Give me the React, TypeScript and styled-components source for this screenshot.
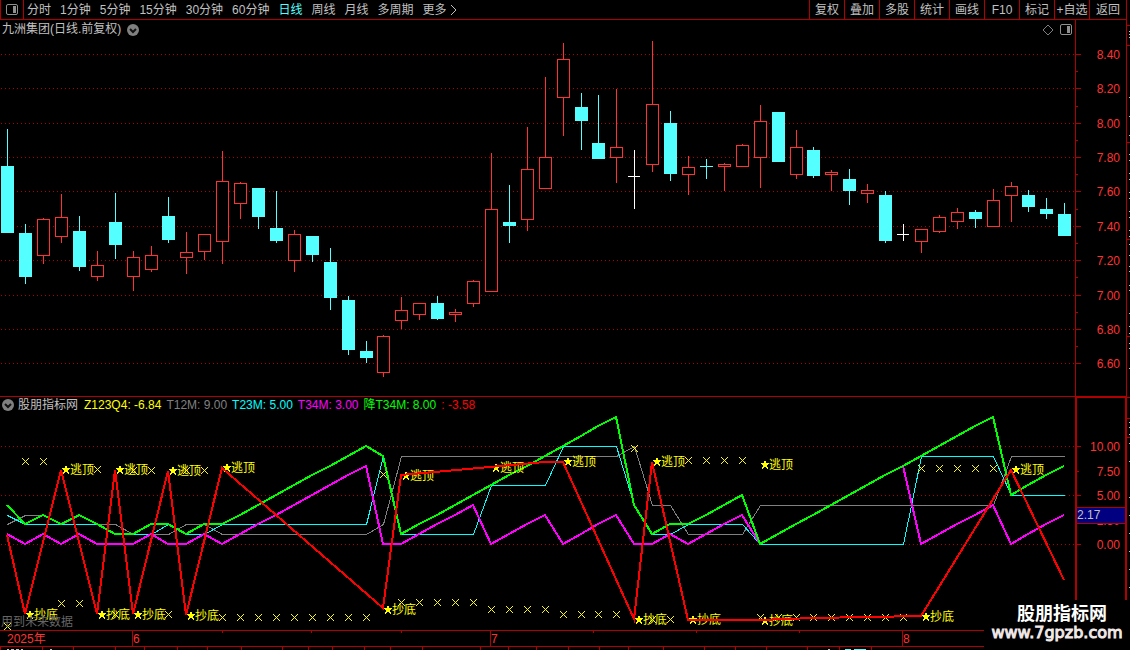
import React, { useLayoutEffect, useRef, useState } from "react";
import styled, { createGlobalStyle } from "styled-components";

const RED = "#b00000";
const BRIGHT = "#ff3232";
const CYAN = "#54ffff";
const YELLOW = "#ffff00";
const FONT = '"Liberation Sans", "Noto Sans CJK SC", sans-serif';

const GlobalStyle = createGlobalStyle`
  *, *::before, *::after { box-sizing: border-box; }
  body { margin: 0; background: #000; font-family: ${FONT}; font-size: 12px; }
`;

const Page = styled.div`
  position: relative;
  display: grid;
  grid-template-columns: minmax(0, 1fr) 4px;
  min-height: 100vh;
  overflow: hidden;
  background: #000;
  color: #c0c0c0;
`;

const Main = styled.main`
  display: grid;
  grid-template-rows: 20px minmax(300px, 376fr) minmax(180px, 234fr) 16px 4px;
  min-width: 0;
`;

const Toolbar = styled.nav`
  display: flex;
  justify-content: space-between;
  overflow: hidden;
  border-bottom: 1px solid ${RED};
`;

const ToolGroup = styled.div`
  display: flex;
  flex: none;
`;

const Periods = styled.div`
  display: flex;
  gap: 9px;
  padding-left: 3px;
`;

const PlainButton = styled.button`
  display: flex;
  align-items: center;
  justify-content: center;
  padding: 0;
  border: 0;
  background: none;
  color: inherit;
  font: inherit;
  line-height: 18px;
  white-space: nowrap;
  cursor: pointer;
`;

const LayoutButton = styled(PlainButton)`
  width: 24px;
  border-left: 1px solid ${RED};
  border-right: 1px solid ${RED};
`;

const PeriodButton = styled(PlainButton)<{ $active?: boolean }>`
  color: ${(p) => (p.$active ? CYAN : "#c0c0c0")};
`;

const ActionButton = styled(PlainButton)`
  width: 35px;
  border-left: 1px solid ${RED};
  &:last-child { width: 37px; }
`;

const Panel = styled.section<{ $ruled?: boolean }>`
  display: grid;
  grid-template-columns: minmax(0, 1fr) 51px;
  border-top: ${(p) => (p.$ruled ? `1px solid ${RED}` : "0")};
`;

const Plot = styled.div`
  position: relative;
  overflow: hidden;
`;

const Scale = styled.div<{ $boxed?: boolean }>`
  position: relative;
  border-left: ${(p) => (p.$boxed ? 2 : 1)}px solid ${RED};
  border-right: ${(p) => (p.$boxed ? 1 : 0)}px solid ${RED};
  border-top: ${(p) => (p.$boxed ? 1 : 0)}px solid ${RED};
`;

const Canvas = styled.svg`
  position: absolute;
  inset: 0;
  width: 100%;
  height: 100%;
  font-family: ${FONT};
  font-size: 12px;
`;

const Heading = styled.header<{ $height: number }>`
  position: relative;
  display: flex;
  align-items: center;
  justify-content: space-between;
  height: ${(p) => p.$height}px;
  padding: 0 3px 0 2px;
  line-height: ${(p) => p.$height}px;
  white-space: nowrap;
`;

const HeadGroup = styled.div<{ $gap: number }>`
  display: flex;
  align-items: center;
  gap: ${(p) => p.$gap}px;
`;

const Title = styled.h1`
  margin: 0;
  font: inherit;
`;

const Readings = styled.div`
  display: flex;
  gap: 5px;
  padding-left: 2px;
`;

const Reading = styled.span<{ $color: string }>`
  color: ${(p) => p.$color};
`;

const Notice = styled.p`
  position: absolute;
  left: 1px;
  bottom: 0;
  margin: 0;
  color: #666;
  line-height: 16px;
`;

const Cursor = styled.output`
  position: absolute;
  left: 0;
  right: 0;
  top: 47%;
  height: 17px;
  border-top: 1px solid ${RED};
  border-bottom: 1px solid ${RED};
  background: #000080;
  color: #c0c0c0;
  line-height: 15px;
`;

const TimeAxis = styled.div`
  position: relative;
  border-top: 1px solid ${RED};
`;

const Ticker = styled.footer`
  position: relative;
  overflow: hidden;
  border-top: 1px solid ${RED};
`;

const Edge = styled.aside`
  position: relative;
  border-left: 1px solid ${RED};
`;

const Watermark = styled.div`
  position: absolute;
  right: 0;
  bottom: 0;
  width: 146px;
  height: 50px;
  padding-top: 4px;
  background: #000;
  color: #fff;
  text-align: center;
  white-space: nowrap;
`;

const SiteName = styled.div`
  padding-left: 10px;
  font-size: 18px;
  font-weight: 700;
  line-height: 20px;
`;

const SiteLink = styled.a`
  display: block;
  color: #f0e8e8;
  font-family: "DejaVu Sans", sans-serif;
  font-size: 16px;
  line-height: 18px;
  text-decoration: none;
  -webkit-text-stroke: 1px #f0e8e8;
`;

function useSize(width: number, height: number) {
  const ref = useRef<HTMLDivElement>(null);
  const [size, setSize] = useState({ w: width, h: height });
  useLayoutEffect(() => {
    const node = ref.current;
    if (!node) return;
    const read = () => setSize({ w: node.clientWidth, h: node.clientHeight });
    read();
    const observer = new ResizeObserver(read);
    observer.observe(node);
    return () => observer.disconnect();
  }, []);
  return { ref, ...size };
}

const BARS = 60;
const barX = (i: number, w: number) => 7 + Math.floor((i * w) / BARS + 0.7);

/* Candle levels: kind, high, body top, body bottom, low. */
type Candle = [kind: "u" | "d" | "f", high: number, top: number, bottom: number, low: number];
const candles: Candle[] = [
  ["d", 129, 166, 233, 233], ["d", 224, 233, 277, 284], ["u", 218, 219, 256, 264], ["u", 194, 217, 237, 243],
  ["d", 216, 231, 267, 271], ["u", 251, 265, 277, 281], ["d", 193, 222, 245, 259], ["u", 251, 257, 277, 291],
  ["u", 246, 255, 270, 272], ["d", 197, 216, 240, 243], ["u", 232, 252, 258, 274], ["u", 234, 234, 252, 260],
  ["u", 151, 181, 242, 264], ["u", 182, 183, 204, 219], ["d", 188, 188, 217, 229], ["d", 191, 228, 241, 243],
  ["u", 230, 234, 261, 272], ["d", 236, 236, 255, 262], ["d", 248, 262, 298, 310], ["d", 296, 300, 350, 355],
  ["d", 341, 351, 358, 363], ["u", 335, 336, 373, 377], ["u", 297, 310, 321, 329], ["u", 303, 303, 315, 320],
  ["d", 296, 303, 319, 320], ["u", 309, 312, 315, 322], ["u", 280, 281, 304, 307], ["u", 153, 209, 292, 292],
  ["d", 185, 222, 226, 243], ["u", 127, 169, 220, 231], ["u", 77, 157, 189, 189], ["u", 43, 59, 98, 136],
  ["d", 93, 107, 121, 150], ["d", 95, 143, 159, 159], ["u", 89, 147, 158, 183], ["f", 150, 176, 177, 209],
  ["u", 41, 104, 165, 172], ["d", 111, 123, 174, 181], ["u", 156, 167, 175, 195], ["d", 159, 166, 167, 179],
  ["u", 163, 164, 167, 191], ["u", 144, 145, 167, 167], ["u", 105, 121, 158, 188], ["d", 112, 112, 162, 162],
  ["u", 130, 147, 175, 179], ["d", 147, 150, 176, 178], ["u", 170, 172, 175, 191], ["d", 169, 179, 191, 205],
  ["u", 184, 190, 194, 203], ["d", 191, 195, 241, 243], ["f", 224, 234, 235, 241], ["u", 229, 229, 242, 253],
  ["u", 215, 217, 232, 233], ["u", 208, 212, 222, 229], ["d", 210, 212, 219, 228], ["u", 189, 200, 227, 227],
  ["u", 182, 186, 196, 222], ["d", 190, 195, 207, 212], ["d", 198, 209, 214, 219], ["d", 203, 214, 236, 236],
];

const PRICE_TOP = 20;
const PRICE_SPAN = 376;
const prices = [8.4, 8.2, 8.0, 7.8, 7.6, 7.4, 7.2, 7.0, 6.8, 6.6];
const levelY = (level: number, h: number) => Math.round(((level - PRICE_TOP) * h) / PRICE_SPAN);
const priceY = (price: number, h: number) => levelY(54 + (8.4 - price) * 171.8, h);

function GridRow({ y, w }: { y: number; w: number }) {
  return <line x1={1} x2={w} y1={y + 0.5} y2={y + 0.5} stroke={RED} strokeDasharray="1 3" />;
}

function CandleMark({ x, h, candle }: { x: number; h: number; candle: Candle }) {
  const [kind, ...levels] = candle;
  const [high, top, bottom, low] = levels.map((v) => levelY(v, h));
  const color = kind === "u" ? BRIGHT : kind === "d" ? CYAN : "#ffffff";
  return (
    <g fill={color}>
      <rect x={x} y={high} width={1} height={Math.max(0, top - high)} />
      <rect x={x} y={bottom} width={1} height={Math.max(0, low - bottom)} />
      {kind === "u" ? (
        <rect x={x - 5.5} y={top + 0.5} width={12} height={Math.max(1, bottom - top - 1)} fill="#000" stroke={color} />
      ) : (
        <rect x={x - 6} y={top} width={kind === "f" ? 12 : 13} height={Math.max(1, bottom - top)} />
      )}
    </g>
  );
}

function PricePanel() {
  const { ref, w, h } = useSize(1075, 376);
  return (
    <Panel>
      <Plot ref={ref}>
        <Canvas aria-label="K线图" shapeRendering="crispEdges">
          {prices.map((p) => <GridRow key={p} y={priceY(p, h)} w={w} />)}
          {candles.map((c, i) => <CandleMark key={i} x={barX(i, w)} h={h} candle={c} />)}
        </Canvas>
        <Heading $height={19}>
          <HeadGroup $gap={6}>
            <Title>九洲集团(日线.前复权)</Title>
            <RoundChevron />
          </HeadGroup>
          <HeadGroup $gap={6}>
            <svg width="12" height="12" viewBox="0 0 12 12" fill="none" stroke="#808080"><path d="M6 1 11 6 6 11 1 6Z" /></svg>
            <SideIcon />
          </HeadGroup>
        </Heading>
      </Plot>
      <Scale>
        <Canvas>
          {prices.map((p) => {
            const y = priceY(p, h);
            return (
              <g key={p} fill={RED}>
                <rect x={0} y={y} width={5} height={1} />
                {p > 6.6 && <rect x={0} y={priceY(p - 0.1, h)} width={2} height={1} />}
                <text x={44} y={y + 5} textAnchor="end" fill={BRIGHT}>{p.toFixed(2)}</text>
              </g>
            );
          })}
        </Canvas>
      </Scale>
    </Panel>
  );
}

const ramp = (from: number, count: number) => Array.from({ length: count }, (_, k) => from + k);
const hold = (value: number, count: number) => Array<number>(count).fill(value);

const fall34 = [4, 2, 3, 2, 3, 2, 1, 1, 2, 2, 1, 2, ...ramp(2, 9), 9, ...ramp(1, 13), 4, 1, 2, ...ramp(2, 4), ...ramp(0, 14), ...ramp(5, 4)];
const t34 = [1, 0, 1, 0, 1, 0, 0, 0, 1, 0, 0, 1, ...ramp(0, 9), 0, ...ramp(0, 5), ...ramp(0, 4), ...ramp(0, 4), 0, 0, 1, ...ramp(0, 4), ...ramp(0, 9), ...ramp(0, 5), ...ramp(0, 4)];
const t23 = [3, ...hold(2, 5), 1, 1, 1, 2, 1, 1, ...hold(2, 9), 9, ...hold(1, 5), ...hold(6, 4), ...hold(10, 4), 4, 1, 1, ...hold(2, 4), ...hold(0, 9), ...hold(9, 5), ...hold(5, 4)];
const t12 = [2, 3, 3, 2, 3, 2, 2, 1, 1, 1, 2, 2, ...hold(1, 9), 2, ...hold(9, 13), 10, 4, 4, ...hold(1, 4), ...hold(4, 14), ...hold(9, 4)];

/* Turning points, crosses and signals: bar index and level. */
const zigzag = [
  [0, 535], [1, 614], [3, 470], [5, 614], [6, 470], [7, 614], [9, 471], [10, 615], [12, 468], [21, 608], [22, 475],
  [30, 462], [31, 462], [35, 619], [36, 462], [38, 620], [42, 620], [45, 618], [51, 616], [56, 470], [59, 580],
];
const crossRuns = [
  [1, 2, 461], [5, 5, 469], [7, 8, 470], [10, 11, 470], [3, 4, 603], [0, 0, 626], [6, 6, 614], [9, 9, 614],
  [12, 20, 617], [21, 21, 474], [22, 26, 602], [27, 30, 609], [31, 34, 614], [35, 35, 448], [36, 37, 619],
  [38, 41, 460], [42, 50, 617], [51, 55, 468],
];
const tops = [[3, 469], [6, 469], [9, 470], [12, 467], [22, 475], [27, 467], [31, 461], [36, 461], [42, 464], [56, 469]];
const bottoms = [[1, 614], [5, 614], [7, 614], [10, 615], [21, 609], [35, 619], [38, 619], [42, 620], [51, 616]];

const STUDY_TOP = 397;
const STUDY_SPAN = 233;
const studyY = (level: number, h: number) => Math.round(((level - STUDY_TOP) * h) / STUDY_SPAN);
const valueY = (value: number, h: number) => studyY(544 - value * 9.8, h);

const readings = [
  { text: "Z123Q4: -6.84", color: YELLOW },
  { text: "T12M: 9.00", color: "#808080" },
  { text: "T23M: 5.00", color: "#00ffff" },
  { text: "T34M: 3.00", color: "#ff00ff" },
  { text: "降T34M: 8.00", color: "#00ff00" },
  { text: ": -3.58", color: "#ff0000" },
];

function Signal({ x, y, text }: { x: number; y: number; text: string }) {
  return (
    <g fill={YELLOW} transform={`translate(${x + 5} ${y})`}>
      <path d="M0-5 1-1H5L2 1 3 5 0 3-3 5-2 1-5-1H-1Z" />
      <text x={4} y={5}>{text}</text>
    </g>
  );
}

function StudyPanel() {
  const { ref, w, h } = useSize(1075, 233);
  const path = (values: number[], shift: number) =>
    values.map((v, i) => `${barX(i, w) + shift},${valueY(v, h) + shift}`).join(" ");
  return (
    <Panel $ruled>
      <Plot ref={ref}>
        <Canvas aria-label="指标图" fill="none" shapeRendering="crispEdges">
          {[10, 5, 0].map((v) => <GridRow key={v} y={valueY(v, h)} w={w} />)}
          <polyline points={path(t12, 0.5)} stroke="#808080" />
          <polyline points={path(t23, 0.5)} stroke="#00ffff" />
          <polyline points={path(t34, 0)} stroke="#ff00ff" strokeWidth={2} />
          <polyline points={path(fall34, 0)} stroke="#00ff00" strokeWidth={2} />
          {crossRuns.flatMap(([from, to, level]) =>
            ramp(from, to - from + 1).map((i) => (
              <path
                key={`${i}-${level}`}
                d={`M${barX(i, w) - 3} ${studyY(level, h) - 3}l7 7m0-7l-7 7`}
                stroke={YELLOW}
              />
            )),
          )}
          {tops.map(([i, level]) => <Signal key={i} x={barX(i, w)} y={studyY(level, h)} text="逃顶" />)}
          {bottoms.map(([i, level]) => <Signal key={i} x={barX(i, w)} y={studyY(level, h)} text="抄底" />)}
          <polyline
            points={zigzag.map(([i, level]) => `${barX(i, w)},${studyY(level, h)}`).join(" ")}
            stroke="#ff0000"
            strokeWidth={2}
          />
        </Canvas>
        <Heading $height={16}>
          <HeadGroup $gap={4}>
            <RoundChevron />
            <Title as="h2">股朋指标网</Title>
            <Readings>
              {readings.map((r) => <Reading key={r.text} $color={r.color}>{r.text}</Reading>)}
            </Readings>
          </HeadGroup>
        </Heading>
        <Notice>用到未来数据</Notice>
      </Plot>
      <Scale $boxed>
        <Canvas>
          {[10, 7.5, 5, 2.5, 0].map((v) => (
            <g key={v} fill={RED}>
              <rect x={0} y={valueY(v, h) - 1} width={v % 5 ? 2 : 4} height={1} />
              <text x={43} y={valueY(v, h) + 4} textAnchor="end" fill={BRIGHT}>{v.toFixed(2)}</text>
            </g>
          ))}
        </Canvas>
        <Cursor>2.17</Cursor>
      </Scale>
    </Panel>
  );
}

function RoundChevron() {
  return (
    <svg width="12" height="12" viewBox="0 0 12 12" fill="none">
      <circle cx="6" cy="6" r="6" fill="#808080" />
      <path d="M3 5 6 8 9 5" stroke="#111" strokeWidth="2" />
    </svg>
  );
}

function SideIcon() {
  return (
    <svg width="12" height="11" viewBox="0 0 12 11" fill="none">
      <rect x="0.5" y="0.5" width="11" height="10" rx="1.5" stroke="#909090" />
      <rect x="7" y="2" width="3" height="7" fill="#909090" />
    </svg>
  );
}

const months = [
  { at: 132, text: "6" },
  { at: 490, text: "7" },
  { at: 902, text: "8" },
];
const dateTicks = [222, 311, 401, 593, 696, 799];

function DateScale() {
  const { ref, w } = useSize(1126, 15);
  const place = (x: number) => Math.round((x * w) / 1126);
  return (
    <TimeAxis ref={ref}>
      <Canvas>
        <text x={7} y={12} fill={BRIGHT}>2025年</text>
        {months.map((m) => (
          <g key={m.text}>
            <rect x={place(m.at)} y={0} width={1} height={15} fill={RED} />
            <text x={place(m.at) + 1} y={12} fill={BRIGHT}>{m.text}</text>
          </g>
        ))}
        {dateTicks.map((x) => <rect key={x} x={place(x)} y={0} width={1} height={2} fill={RED} />)}
      </Canvas>
    </TimeAxis>
  );
}

const tickerStops = [
  0, 42, 73, 115, 144, 177, 207, 241, 282, 308, 332, 364, 390, 422, 480, 508, 536, 568, 599, 628, 663, 704, 735, 766,
  807, 839, 871,
];

const periods = ["分时", "1分钟", "5分钟", "15分钟", "30分钟", "60分钟", "日线", "周线", "月线", "多周期"];
const actions = ["复权", "叠加", "多股", "统计", "画线", "F10", "标记", "+自选", "返回"];

export default function App() {
  return (
    <>
      <GlobalStyle />
      <Page>
        <Main>
          <Toolbar>
            <ToolGroup>
              <LayoutButton aria-label="布局"><SideIcon /></LayoutButton>
              <Periods>
                {periods.map((p) => <PeriodButton key={p} $active={p === "日线"}>{p}</PeriodButton>)}
                <PeriodButton>
                  更多
                  <svg width="12" height="12" viewBox="0 0 12 12" fill="none" stroke="#c0c0c0"><path d="M4 1 9 6 4 11" /></svg>
                </PeriodButton>
              </Periods>
            </ToolGroup>
            <ToolGroup>
              {actions.map((a) => <ActionButton key={a}>{a}</ActionButton>)}
            </ToolGroup>
          </Toolbar>
          <PricePanel />
          <StudyPanel />
          <DateScale />
          <Ticker>
            <Canvas shapeRendering="crispEdges">
              {tickerStops.map((x) => <rect key={x} x={x} y={0} width={1} height={3} fill={RED} />)}
              <path d="M7 2.5h2m2 0h3m2 0h3m2 0h2M50 2.5h2M828 2.5h2" stroke="#c0c0c0" />
              <path d="M845 2.5h6m3 0h12" stroke={CYAN} />
            </Canvas>
          </Ticker>
        </Main>
        <Edge>
          <Canvas shapeRendering="crispEdges">
            {[25, 45, 142, 239, 336, 397, 418, 437].map((y) => (
              <rect key={y} x={0} y={y} width={3} height={1} fill={RED} />
            ))}
            {[31, 34, 37, 97, 116, 135, 154, 160, 173, 179, 192, 198, 211, 217, 230, 236, 244, 255, 266, 271, 285, 290, 313, 326, 333, 343, 348, 368, 422, 427, 434, 443, 461, 497, 515, 533, 551, 569, 587].map((y) => (
              <rect key={y} x={2} y={y} width={1} height={1} fill="#c0c0c0" />
            ))}
          </Canvas>
        </Edge>
        <Watermark>
          <SiteName>股朋指标网</SiteName>
          <SiteLink href="#">www.7gpzb.com</SiteLink>
        </Watermark>
      </Page>
    </>
  );
}
